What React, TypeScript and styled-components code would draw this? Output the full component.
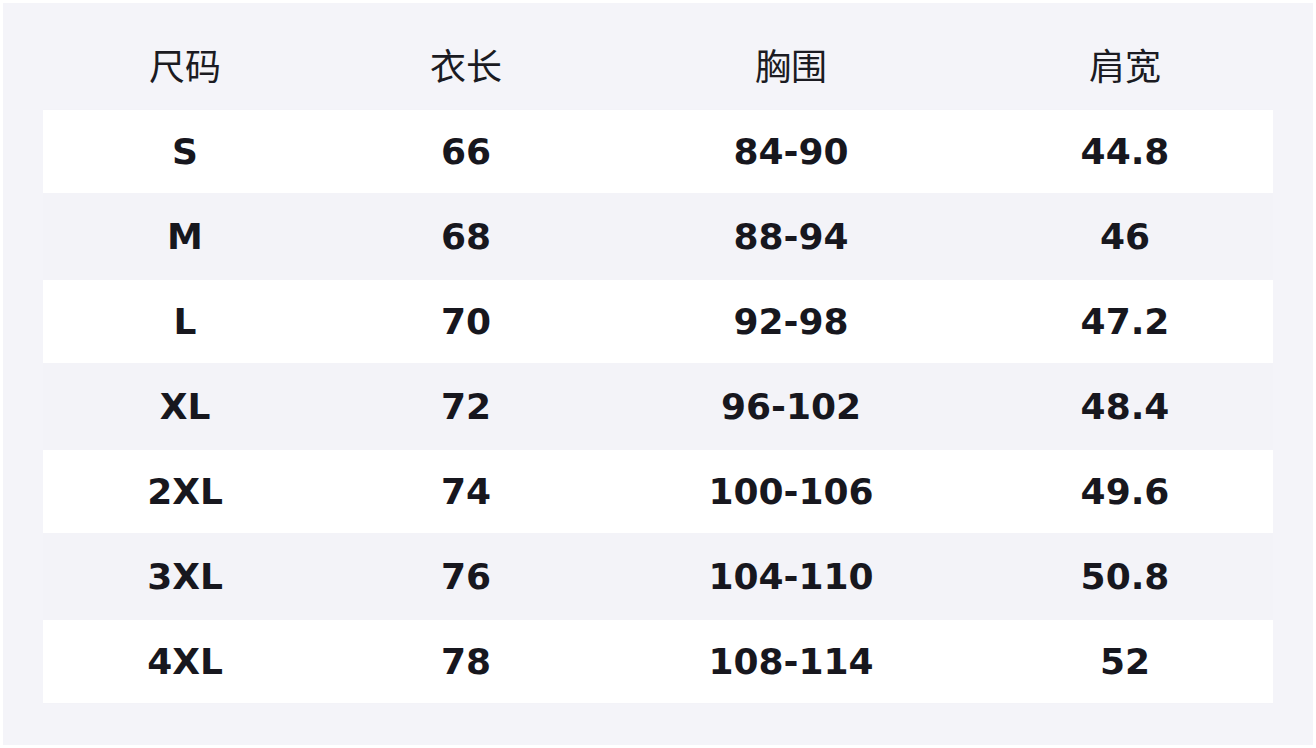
import { createGlobalStyle, styled } from 'styled-components';

interface SizeRow {
  size: string;
  length: string;
  chest: string;
  shoulder: string;
}

const ROWS: SizeRow[] = [
  { size: 'S', length: '66', chest: '84-90', shoulder: '44.8' },
  { size: 'M', length: '68', chest: '88-94', shoulder: '46' },
  { size: 'L', length: '70', chest: '92-98', shoulder: '47.2' },
  { size: 'XL', length: '72', chest: '96-102', shoulder: '48.4' },
  { size: '2XL', length: '74', chest: '100-106', shoulder: '49.6' },
  { size: '3XL', length: '76', chest: '104-110', shoulder: '50.8' },
  { size: '4XL', length: '78', chest: '108-114', shoulder: '52' },
];

const HEADERS = ['尺码', '衣长', '胸围', '肩宽'];

const GlobalStyle = createGlobalStyle`
  html, body {
    margin: 0;
    padding: 0;
    background: #ffffff;
  }
  body {
    font-family: "DejaVu Sans", "Noto Sans CJK SC", sans-serif;
  }
`;

// 사이즈표
const App = () => {
  return (
    <>
      <GlobalStyle />
      <Page>
        <Panel>
          <Table>
            <HeaderRow>
              {HEADERS.map((title) => (
                <HeaderCell key={title}>{title}</HeaderCell>
              ))}
            </HeaderRow>
            {ROWS.map((row, index) => (
              <BodyRow key={row.size} $white={index % 2 === 0}>
                <Cell>{row.size}</Cell>
                <Cell>{row.length}</Cell>
                <Cell>{row.chest}</Cell>
                <Cell>{row.shoulder}</Cell>
              </BodyRow>
            ))}
          </Table>
        </Panel>
      </Page>
    </>
  );
};

const Page = styled.div`
  padding: 3px;
  width: 1316px;
  height: 748px;
  box-sizing: border-box;
`;

const Panel = styled.section`
  width: 1310px;
  height: 742px;
  box-sizing: border-box;
  padding: 27px 40px 0;
  background: #f4f4f9;
`;

const Table = styled.div`
  display: flex;
  flex-direction: column;
  width: 1230px;
`;

const columns = `
  display: grid;
  grid-template-columns: 284px 278px 372px 296px;
  align-items: center;
  justify-items: center;
`;

const HeaderRow = styled.div`
  ${columns};
  height: 79px;
`;

const HeaderCell = styled.div`
  font-family: "Noto Sans CJK SC", "DejaVu Sans", sans-serif;
  font-size: 36px;
  font-weight: 400;
  color: #1b1b22;
  margin-top: -12px;
`;

const BodyRow = styled.div<{ $white: boolean }>`
  ${columns};
  height: 85px;
  box-sizing: border-box;
  border-top: 1px solid #f3f3f8;
  border-bottom: 1px solid #f3f3f8;
  background: ${({ $white }) => ($white ? '#ffffff' : '#f3f3f8')};
`;

const Cell = styled.div`
  font-family: "DejaVu Sans", sans-serif;
  font-size: 36px;
  font-weight: 700;
  color: #17171e;
`;

export default App;
